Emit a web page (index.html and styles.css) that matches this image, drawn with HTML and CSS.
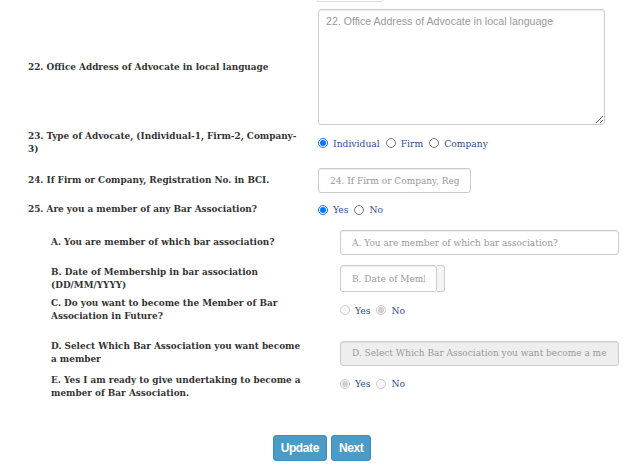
FILE: index.html
```html
<!DOCTYPE html>
<html lang="en">
<head>
  <meta charset="UTF-8" />
  <title>Advocate Details</title>
  <link rel="stylesheet" href="styles.css">
</head>
<body>
<div class="prev-edge"></div>

<form class="adv-form">
  <!-- 22 -->
  <div class="row gap-xs">
    <label class="lbl">22. Office Address of Advocate in local language</label>
    <div class="ctrl">
      <textarea class="txt-area" placeholder="22. Office Address of Advocate in local language"></textarea>
    </div>
  </div>

  <!-- 23 -->
  <div class="row gap-m">
    <label class="lbl">23. Type of Advocate, (Individual-1, Firm-2, Company-3)</label>
    <div class="ctrl radios">
      <label class="opt"><input type="radio" name="advtype" checked> Individual</label>
      <label class="opt"><input type="radio" name="advtype"> Firm</label>
      <label class="opt"><input type="radio" name="advtype"> Company</label>
    </div>
  </div>

  <!-- 24 -->
  <div class="row">
    <label class="lbl">24. If Firm or Company, Registration No. in BCI.</label>
    <div class="ctrl">
      <input type="text" class="inp inp-short" placeholder="24. If Firm or Company, Registration No. in BCI.">
    </div>
  </div>

  <!-- 25 -->
  <div class="row gap-l">
    <label class="lbl">25. Are you a member of any Bar Association?</label>
    <div class="ctrl radios">
      <label class="opt"><input type="radio" name="member" checked> Yes</label>
      <label class="opt"><input type="radio" name="member"> No</label>
    </div>
  </div>

  <div class="sub">
    <div class="row">
      <label class="lbl">A. You are member of which bar association?</label>
      <div class="ctrl">
        <input type="text" class="inp inp-wide" placeholder="A. You are member of which bar association?">
      </div>
    </div>

    <div class="row gap-xs">
      <label class="lbl">B. Date of Membership in bar association (DD/MM/YYYY)</label>
      <div class="ctrl">
        <div class="date-group">
          <input type="text" class="inp inp-date" placeholder="B. Date of Membership">
          <span class="date-addon"></span>
        </div>
      </div>
    </div>

    <div class="row gap-xl">
      <label class="lbl">C. Do you want to become the Member of Bar Association in Future?</label>
      <div class="ctrl radios">
        <label class="opt"><input type="radio" name="future" disabled> Yes</label>
        <label class="opt"><input type="radio" name="future" checked disabled> No</label>
      </div>
    </div>

    <div class="row gap-xs">
      <label class="lbl">D. Select Which Bar Association you want become a member</label>
      <div class="ctrl">
        <input type="text" class="inp inp-wide" placeholder="D. Select Which Bar Association you want become a member" disabled>
      </div>
    </div>

    <div class="row row-top">
      <label class="lbl">E. Yes I am ready to give undertaking to become a member of Bar Association.</label>
      <div class="ctrl radios">
        <label class="opt"><input type="radio" name="undertake" checked disabled> Yes</label>
        <label class="opt"><input type="radio" name="undertake" disabled> No</label>
      </div>
    </div>
  </div>

  <div class="actions">
    <button type="button" class="btn">Update</button>
    <button type="button" class="btn">Next</button>
  </div>
</form>
</body>
</html>
```

FILE: styles.css
```css
* {
  box-sizing: border-box;
}

body {
  margin: 0;
  background-color: #FFFFFF;
  color: #333333;
  font-family: 'DejaVu Serif', Georgia, serif;
}

/* bottom of the field above, cut off by the scroll */
.prev-edge {
  width: 66px;
  height: 2px;
  margin-left: 317px;
  border: 1px solid #DDDDDD;
  border-top: none;
  border-radius: 0 0 3px 3px;
}

.adv-form {
  padding: 7px 0 0 28px;
}

/* ===== Rows ===== */
.row {
  display: flex;
  align-items: center;
  margin-bottom: 10px;
}

.row.gap-xs {
  margin-bottom: 5px;
}

.row.gap-m {
  margin-bottom: 12px;
}

.row.gap-l {
  margin-bottom: 14px;
}

.row.gap-xl {
  margin-bottom: 17px;
}

.row.row-top {
  align-items: flex-start;
  padding-top: 3px;
}

.row-top .radios {
  margin-top: 4px;
}

.lbl {
  width: 272px;
  margin-right: 18px;
  font-size: 8.9px;
  font-weight: bold;
  line-height: 13px;
}

.sub {
  padding-left: 23px;
}

.sub .lbl {
  width: 252px;
  margin-right: 37px;
}

/* ===== Controls ===== */
.txt-area {
  display: block;
  width: 287px;
  height: 116px;
  padding: 5px 7px;
  border: 1px solid #CCCCCC;
  border-radius: 3px;
  box-shadow: inset 0 1px 1px rgba(0, 0, 0, 0.075);
  font-family: 'Liberation Sans', Arial, sans-serif;
  font-size: 10.6px;
  color: #555555;
}

.txt-area::placeholder {
  color: #999999;
}

.inp {
  display: block;
  height: 25px;
  padding: 4px 11px;
  border: 1px solid #CCCCCC;
  border-radius: 3px;
  box-shadow: inset 0 1px 1px rgba(0, 0, 0, 0.075);
  font-family: 'DejaVu Serif', Georgia, serif;
  font-size: 9px;
  color: #555555;
}

.inp::placeholder {
  color: #999999;
}

.inp:disabled {
  background-color: #EEEEEE;
}

.inp-short {
  width: 153px;
}

.inp-wide {
  width: 279px;
}

.date-group {
  display: flex;
  height: 27px;
}

.inp-date {
  width: 97px;
  height: 27px;
}

.date-addon {
  width: 8px;
  border: 1px solid #CCCCCC;
  border-left: none;
  border-radius: 0 3px 3px 0;
  background-color: #F5F5F5;
}

/* ===== Radios ===== */
.radios {
  display: flex;
  gap: 6px;
}

.opt {
  display: flex;
  align-items: center;
  font-size: 9.2px;
  color: #2E4E8E;
}

.opt input {
  width: 10px;
  height: 10px;
  margin: 0 5px 0 0;
}

/* ===== Buttons ===== */
.actions {
  display: flex;
  justify-content: center;
  gap: 4px;
  margin: 35px 0 0 -28px;
}

.btn {
  height: 26px;
  padding: 0 7px;
  background-color: #4A9BC7;
  border: 1px solid #3E8DBA;
  border-radius: 3px;
  color: #FFFFFF;
  font-family: 'Liberation Sans', Arial, sans-serif;
  font-size: 12px;
  font-weight: bold;
  letter-spacing: -0.4px;
}
```
